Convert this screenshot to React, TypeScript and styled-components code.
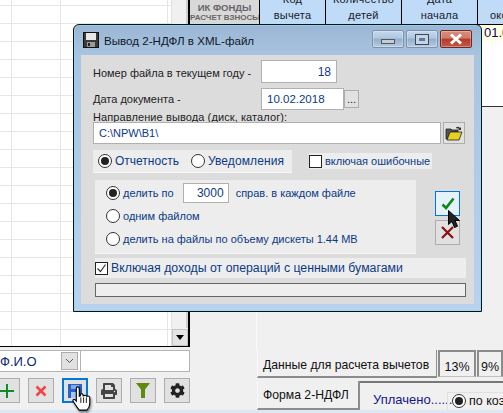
import React from "react";
import styled, { createGlobalStyle } from "styled-components";
import { FaCog, FaPrint } from "react-icons/fa";

const Global = createGlobalStyle`
  html, body { margin: 0; padding: 0; width: 503px; height: 413px; overflow: hidden; background: #f0f0f0; }
  * { box-sizing: border-box; }
  body { font-family: "Liberation Sans", Arial, sans-serif; font-size: 12px; }
`;

const Page = styled.div`position: relative; width: 503px; height: 413px; overflow: hidden; display: flex; flex-direction: column; background: #f0f0f0;`;
const Main = styled.div`display: flex; height: 410px;`;
const Strip = styled.div`height: 3px; background: #dce9f5;`;
const LeftCol = styled.div`width: 190px; flex: none;`;
const RightCol = styled.div`flex: 1; min-width: 0; display: flex; flex-direction: column; overflow: hidden;`;

const DataGrid = styled.div`
  height: 347px; display: flex; border-right: 2px solid #000; border-bottom: 1px solid #000;
  background: #fff;
`;
const GridCells = styled.div`
  flex: 1;
  background-color: #fff;
  background-image:
    linear-gradient(#e6e6e6, #e6e6e6), linear-gradient(#e6e6e6, #e6e6e6), linear-gradient(#e6e6e6, #e6e6e6),
    repeating-linear-gradient(to bottom, transparent 0 5px, #e6e6e6 5px 6px, transparent 6px 18px);
  background-size: 1px 100%, 1px 100%, 1px 100%, 100% 100%;
  background-position: 11px 0, 60px 0, 167px 0, 0 0;
  background-repeat: no-repeat;
`;
const ScrollBar = styled.div`width: 17px; background: #f0f0f0; display: flex; flex-direction: column; justify-content: flex-end; border-left: 1px solid #e0e0e0;`;
const ScrollThumb = styled.div`flex: 1; margin: 0 0 1px; background: #f0f0f0; border-right: 2px solid #cfcfcf;`;
const ScrollBtn = styled.div`height: 17px; background: #e4e4e4; border: 1px solid #c4c4c4; display: flex; align-items: center; justify-content: center;
  &::before { content: ""; border-left: 4px solid transparent; border-right: 4px solid transparent; border-top: 5px solid #000; }`;

const Combo = styled.div`display: flex; margin-top: 3px; height: 22px; background: #fff; border: 1px solid #b4b4b4; border-left: 0; align-items: center;`;
const ComboText = styled.div`width: 61px; font-size: 13px; color: #0a2a6e; white-space: nowrap; overflow: hidden;`;
const ComboBtn = styled.div`width: 17px; height: 18px; background: #e1e1e1; border: 1px solid #adadad; display: flex; align-items: center; justify-content: center;`;
const ComboRest = styled.div`flex: 1; height: 100%; margin-left: 2px; border-left: 1px solid #b4b4b4;`;

const Toolbar = styled.div`display: flex; gap: 8px; margin: 6px 0 0 -6px;`;
const ToolBtn = styled.div<{ $active?: boolean }>`
  position: relative; width: 26px; height: 25px; flex: none; display: flex; align-items: center; justify-content: center;
  background: #e1e1e1; border: ${p => (p.$active ? "2px solid #0078d7" : "1px solid #adadad")};
`;
const HandIcon = styled.svg`position: absolute; left: 8px; top: 5px; z-index: 3; filter: drop-shadow(1px 2px 1px rgba(0,0,0,.45));`;

const Table = styled.div`height: 107px; flex: none; background: #fff; border-bottom: 1px solid #333; position: relative;`;
const HeadRow = styled.div`display: flex; height: 25px; border-bottom: 1px solid #000;`;
const FundBtn = styled.div`width: 69px; flex: none; background: #d8d8d8; border-bottom: 1px solid #d8d8d8; color: #666; font-weight: bold; text-align: center; font-size: 9.5px; line-height: 10px; padding-top: 3px; white-space: nowrap; overflow: hidden;`;
const FundSub = styled.div`font-size: 8px; line-height: 9px;`;
const HeadCell = styled.div<{ $w: number }>`
  width: ${p => p.$w}px; flex: none; background: #bfdbf7; border-left: 1px solid #000;
  display: flex; flex-direction: column; justify-content: flex-end; text-align: center; font-size: 11px; letter-spacing: 0.2px; line-height: 16px; color: #1a1a2a; padding-bottom: 1px; overflow: hidden; white-space: nowrap;
`;
const DataRow = styled.div`display: flex; height: 16px; padding-left: 288px;`;
const YellowCell = styled.div`width: 80px; flex: none; background: #ffffe1; border-left: 1px solid #000; color: #0a0a6e; font-size: 13px; line-height: 16px; padding-left: 5px; white-space: nowrap;`;

const Spacer = styled.div`flex: 1; margin-left: 66px; border-left: 1px solid #fafafa;`;
const TabBlock = styled.div`flex: none; margin-left: 67px;`;
const TabRow = styled.div`display: flex; height: 30px;`;
const PlainTab = styled.div`width: 180px; height: 28px; flex: none; border-bottom: 2px solid #8c8c8c; border-right: 1px solid #8c8c8c; border-left: 1px solid #fafafa; color: #111; line-height: 30px; padding-left: 5px; white-space: nowrap; font-size: 12.2px;`;
const PctTab = styled.div<{ $w: number }>`width: ${p => p.$w}px; height: 27px; flex: none; border: 2px solid #8c8c8c; border-bottom: 1px solid #c0c0c0; margin-left: 1px; font-size: 12.5px; color: #111; text-align: center; line-height: 30px;`;
const FormRow = styled.div`display: flex; height: 29px; margin-top: 1px;`;
const FormTab = styled.div`width: 103px; flex: none; border-bottom: 2px solid #8c8c8c; border-right: 2px solid #8c8c8c; border-left: 1px solid #fafafa; font-size: 12.2px; color: #111; line-height: 29px; padding-left: 5px; white-space: nowrap;`;
const FormPane = styled.div`flex: 1; border-top: 2px solid #777; display: flex; align-items: flex-start; padding: 9px 0 0 13px; white-space: nowrap; overflow: hidden;`;
const PaidText = styled.div`color: #14148c; font-size: 13px; line-height: 16px; width: 74px; flex: none;`;
const CoefGroup = styled.div`flex: none; display: flex; align-items: flex-start; gap: 3px; height: 20px; padding: 1px 0 0 4px; width: 100px; border-left: 1px solid #e0e0e0; border-top: 1px solid #e0e0e0; color: #111; font-size: 12.5px; line-height: 14px;`;

const Win = styled.div`
  position: absolute; left: 73px; top: 24px; width: 409px; height: 288px; z-index: 2;
  border: 1px solid #111; border-radius: 6px 6px 0 0;
  background: linear-gradient(to bottom, #9bb6d4 0, #a9c4e0 30px, #b9d3ee 100%);
  box-shadow: inset 0 0 0 1px rgba(120, 230, 250, .65);
  padding: 0 7px 7px;
  display: flex; flex-direction: column;
`;
const TitleBar = styled.div`height: 30px; flex: none; display: flex; align-items: center; padding: 0 2px;`;
const TitleText = styled.div`margin-left: 5px; font-size: 11.6px; color: #101828; flex: 1; white-space: nowrap; margin-top: 1px;`;
const WinBtn = styled.div<{ $close?: boolean }>`
  width: 32px; height: 18px; margin-left: 2px; margin-top: -2px; flex: none; border-radius: 2px;
  display: flex; align-items: center; justify-content: center;
  border: 1px solid ${p => (p.$close ? "#6e2a22" : "#7d92ad")};
  background: ${p => p.$close
    ? "linear-gradient(to bottom, #d98c7e 0, #cf7a6a 45%, #b33a28 50%, #c25a48 100%)"
    : "linear-gradient(to bottom, #c6d8ec 0, #afc6e0 45%, #94aecb 50%, #b4cbe3 100%)"};
  box-shadow: inset 0 0 0 1px rgba(255,255,255,.3);
`;
const MinGlyph = styled.div`width: 14px; height: 5px; margin-top: 4px; background: #c9cdd2; border: 1px solid #4e5a68;`;
const MaxGlyph = styled.div`width: 14px; height: 11px; background: #c8d4e2; border: 1px solid #3c4858; display: flex; align-items: center; justify-content: center;
  &::before { content: ""; width: 6px; height: 3px; background: #5d7d9d; }`;

const Client = styled.div`flex: 1; background: #dcdcdc; padding: 5px 0 0 12px;`;
const FieldRow = styled.div<{ $h: number; $mt?: number }>`display: flex; align-items: center; height: ${p => p.$h}px; margin-top: ${p => p.$mt ?? 0}px;`;
const FieldLabel = styled.div<{ $pt?: number }>`width: 168px; flex: none; font-size: 11px; color: #1c1c1c; padding-top: ${p => p.$pt ?? 0}px; white-space: nowrap;`;
const Input = styled.div<{ $w: number; $h?: number; $right?: boolean; $size?: number }>`
  width: ${p => p.$w}px; height: ${p => p.$h ?? 22}px; flex: none; background: #fff; border: 1px solid #b0b0b0;
  color: #0b3a86; font-size: ${p => p.$size ?? 11}px; display: flex; align-items: center; padding: 0 5px;
  justify-content: ${p => (p.$right ? "flex-end" : "flex-start")};
`;
const DotsBtn = styled.div`width: 15px; height: 18px; flex: none; background: #e1e1e1; border: 1px solid #adadad; font-size: 11px; color: #222; text-align: center; line-height: 17px;`;
const DirLabel = styled.div`height: 12px; line-height: 14px; font-size: 11px; color: #1c1c1c; letter-spacing: 0.1px; white-space: nowrap;`;
const FolderBtn = styled.div`width: 22px; height: 22px; margin-left: 2px; flex: none; background: #e1e1e1; border: 1px solid #adadad; display: flex; align-items: center; justify-content: center;`;

const OptionsRow = styled.div`display: flex; margin-top: 6px; height: 23px;`;
const KindGroup = styled.div`width: 199px; height: 23px; flex: none; background: #ededed; border-bottom: 1px solid #f8f8f8; display: flex; align-items: center; padding-left: 5px;`;
const RadioItem = styled.div<{ $gap?: number }>`display: flex; align-items: center; gap: 3px; margin-right: ${p => p.$gap ?? 0}px;`;
const Radio = styled.div<{ $on?: boolean }>`
  width: 14px; height: 14px; flex: none; border-radius: 50%; border: 1px solid #333; background: #fff;
  display: flex; align-items: center; justify-content: center;
  &::before { content: ""; width: 8px; height: 8px; border-radius: 50%; background: ${p => (p.$on ? "#222" : "transparent")}; }
`;
const BlueText = styled.span<{ $size?: number; $ls?: number }>`color: #0b3a86; font-size: ${p => p.$size ?? 11}px; letter-spacing: ${p => p.$ls ?? 0}px; white-space: nowrap;`;
const ErrGroup = styled.div`width: 123px; height: 16px; margin: 3px 0 0 17px; flex: none; background: #ededed; display: flex; align-items: center; gap: 3px;`;
const Check = styled.div`width: 13px; height: 13px; flex: none; background: #fff; border: 1px solid #222; display: flex; align-items: center; justify-content: center;`;

const LowerRow = styled.div`display: flex; margin-top: 7px; height: 74px;`;
const SplitPanel = styled.div`margin-left: 2px; width: 321px; height: 73px; flex: none; background: #ededed; box-shadow: 0 1px 0 #f8f8f8; padding-left: 11px;`;
const SplitRow = styled.div<{ $h: number }>`height: ${p => p.$h}px; display: flex; align-items: center; gap: 3px;`;
const CountInput = styled.div`width: 46px; height: 20px; flex: none; margin: 0 4px 0 6px; background: #fff; border: 1px solid #b0b0b0; color: #0b3a86; font-size: 12px; line-height: 18px; text-align: right; padding-right: 4px;`;
const ActionCol = styled.div`margin: 11px 0 0 19px; display: flex; flex-direction: column; gap: 4px;`;
const ActionBtn = styled.div<{ $active?: boolean }>`
  position: relative; width: 25px; height: 25px; display: flex; align-items: center; justify-content: center;
  background: ${p => (p.$active ? "#e5f1fb" : "#e1e1e1")}; border: 1px solid ${p => (p.$active ? "#0078d7" : "#adadad")};
`;
const ArrowIcon = styled.svg`position: absolute; left: 12px; top: 18px; z-index: 3;`;
const IncomeRow = styled.div`margin: 4px 0 0 2px; width: 371px; height: 20px; background: #ededed; display: flex; align-items: center; gap: 3px;`;
const Progress = styled.div`margin: 5px 0 0 2px; width: 371px; height: 14px; background: #eeeeee; border: 1px solid #666;`;

const Floppy = ({ s = 16 }: { s?: number }) => (
  <svg width={s} height={s} viewBox="0 0 16 16">
    <rect x="0.5" y="0.5" width="15" height="15" fill="#3a3a3a" stroke="#111" />
    <rect x="3" y="1" width="10" height="7" fill="#e8e8e8" />
    <rect x="4" y="10" width="8" height="5" fill="#9a9a9a" />
    <rect x="5" y="11" width="2" height="3" fill="#222" />
  </svg>
);

export default function App() {
  return (
    <Page>
      <Global />
      <Main>
        <LeftCol>
          <DataGrid>
            <GridCells />
            <ScrollBar>
              <ScrollThumb />
              <ScrollBtn />
            </ScrollBar>
          </DataGrid>
          <Combo>
            <ComboText>Ф.И.О</ComboText>
            <ComboBtn>
              <svg width="9" height="6" viewBox="0 0 9 6"><path d="M1 1l3.5 3.5L8 1" fill="none" stroke="#555" /></svg>
            </ComboBtn>
            <ComboRest />
          </Combo>
          <Toolbar>
            <ToolBtn>
              <svg width="14" height="14" viewBox="0 0 14 14"><path d="M6 0h2v6h6v2H8v6H6V8H0V6h6z" fill="#0f8a2e" /></svg>
            </ToolBtn>
            <ToolBtn>
              <svg width="12" height="12" viewBox="0 0 12 12"><path d="M1.5 1.5l9 9M10.5 1.5l-9 9" stroke="#f04545" strokeWidth="2.6" /></svg>
            </ToolBtn>
            <ToolBtn $active>
              <svg width="14" height="14" viewBox="0 0 14 14">
                <rect width="14" height="14" fill="#2a62c8" />
                <rect x="3" y="1" width="8" height="4" fill="#7fa8ea" />
                <rect x="3" y="8" width="8" height="6" fill="#a9c4f2" />
              </svg>
              <HandIcon width="21" height="27" viewBox="0 0 19 24">
                <path d="M5 1.5c1 0 1.6.7 1.6 1.7V10l1-.3V8.5c.4-1 2-1 2.4 0v1.2l.8-.1c.5-.8 2-.6 2.3.3l.8.1c.7-.5 2-.1 2.2 1v5.5c0 2.5-1.3 4.700-2.600 6H6.500C5 20.500 2.800 17.500 1 14.500c-.6-1 .6-2.400 1.900-1.300l1 1.100V3.200C3.900 2.200 4 1.500 5 1.500z" fill="#fff" stroke="#000" strokeWidth="1" />
                <path d="M8 11v5M10.5 11v5M13 11v5" stroke="#000" strokeWidth=".8" />
              </HandIcon>
            </ToolBtn>
            <ToolBtn><FaPrint size={16} color="#444" /></ToolBtn>
            <ToolBtn>
              <svg width="14" height="15" viewBox="0 0 14 15"><path d="M0 0h14L9 6.5V15H5V6.5z" fill="#5f8a0c" /></svg>
            </ToolBtn>
            <ToolBtn><FaCog size={15} color="#222" /></ToolBtn>
          </Toolbar>
        </LeftCol>
        <RightCol>
          <Table>
            <HeadRow>
              <FundBtn>ИК ФОНДЫ<FundSub>РАСЧЕТ ВЗНОСЫ</FundSub></FundBtn>
              <HeadCell $w={66}><div>Код</div><div>вычета</div></HeadCell>
              <HeadCell $w={76}><div>Количество</div><div>детей</div></HeadCell>
              <HeadCell $w={76}><div>Дата</div><div>начала</div></HeadCell>
              <HeadCell $w={80}><div>Дата</div><div>окончания</div></HeadCell>
            </HeadRow>
            <DataRow><YellowCell>01.01.2018</YellowCell></DataRow>
          </Table>
          <Spacer />
          <TabBlock>
            <TabRow>
              <PlainTab>Данные для расчета вычетов</PlainTab>
              <PctTab $w={38}>13%</PctTab>
              <PctTab $w={26}>9%</PctTab>
            </TabRow>
            <FormRow>
              <FormTab>Форма 2-НДФЛ</FormTab>
              <FormPane>
                <PaidText>Уплачено.......</PaidText>
                <CoefGroup><Radio $on />по коэ</CoefGroup>
              </FormPane>
            </FormRow>
          </TabBlock>
        </RightCol>
      </Main>
      <Strip />

      <Win>
        <TitleBar>
          <Floppy />
          <TitleText>Вывод 2-НДФЛ в XML-файл</TitleText>
          <WinBtn><MinGlyph /></WinBtn>
          <WinBtn><MaxGlyph /></WinBtn>
          <WinBtn $close>
            <svg width="16" height="12" viewBox="0 0 16 12"><path d="M3 1.5l10 9M13 1.5l-10 9" stroke="#fff" strokeWidth="3" /></svg>
          </WinBtn>
        </TitleBar>
        <Client>
          <FieldRow $h={23}>
            <FieldLabel $pt={3}>Номер файла в текущем году -</FieldLabel>
            <Input $w={76} $h={23} $right $size={12}>18</Input>
          </FieldRow>
          <FieldRow $h={22} $mt={5}>
            <FieldLabel>Дата документа -</FieldLabel>
            <Input $w={83} $size={11.5}>10.02.2018</Input>
            <DotsBtn>...</DotsBtn>
          </FieldRow>
          <DirLabel>Направление вывода (диск, каталог):</DirLabel>
          <FieldRow $h={22}>
            <Input $w={348}>C:\NPW\B1\</Input>
            <FolderBtn>
              <svg width="18" height="15" viewBox="0 0 18 15">
                <path d="M1 3h5l1 1h6v2H5L2 13H1z" fill="#555" stroke="#222" strokeWidth=".8" />
                <path d="M5 6h12l-3 8H2z" fill="#e8d020" stroke="#222" strokeWidth=".8" />
                <path d="M11 1.5c1.5-1 3-.8 4 .5l1-1v3h-3l1-1c-.8-.8-1.8-.8-3-.5z" fill="#333" />
              </svg>
            </FolderBtn>
          </FieldRow>
          <OptionsRow>
            <KindGroup>
              <RadioItem $gap={12}><Radio $on /><BlueText $size={12}>Отчетность</BlueText></RadioItem>
              <RadioItem><Radio /><BlueText $size={12} $ls={0.1}>Уведомления</BlueText></RadioItem>
            </KindGroup>
            <ErrGroup><Check /><BlueText>включая ошибочные</BlueText></ErrGroup>
          </OptionsRow>
          <LowerRow>
            <SplitPanel>
              <SplitRow $h={25}>
                <Radio $on /><BlueText>делить по</BlueText>
                <CountInput>3000</CountInput>
                <BlueText>справ. в каждом файле</BlueText>
              </SplitRow>
              <SplitRow $h={22}><Radio /><BlueText>одним файлом</BlueText></SplitRow>
              <SplitRow $h={24}><Radio /><BlueText>делить на файлы по объему дискеты 1.44 MB</BlueText></SplitRow>
            </SplitPanel>
            <ActionCol>
              <ActionBtn $active>
                <svg width="14" height="13" viewBox="0 0 14 13"><path d="M1.5 7.5L5 11l7.5-9.5" fill="none" stroke="#0a8a14" strokeWidth="2.6" /></svg>
                <ArrowIcon width="12" height="19" viewBox="0 0 12 19">
                  <path d="M0.5 0.5v14l3.5-3 2.5 6 3-1.3-2.5-5.700h4.500z" fill="#222" stroke="#000" />
                </ArrowIcon>
              </ActionBtn>
              <ActionBtn>
                <svg width="13" height="13" viewBox="0 0 13 13"><path d="M1 1l11 11M12 1L1 12" stroke="#8a1010" strokeWidth="2.2" /></svg>
              </ActionBtn>
            </ActionCol>
          </LowerRow>
          <IncomeRow>
            <Check>
              <svg width="11" height="11" viewBox="0 0 11 11"><path d="M1.5 5.5l3 3 5-7" fill="none" stroke="#333" strokeWidth="1.2" /></svg>
            </Check>
            <BlueText $size={12.3}>Включая доходы от операций с ценными бумагами</BlueText>
          </IncomeRow>
          <Progress />
        </Client>
      </Win>
    </Page>
  );
}
